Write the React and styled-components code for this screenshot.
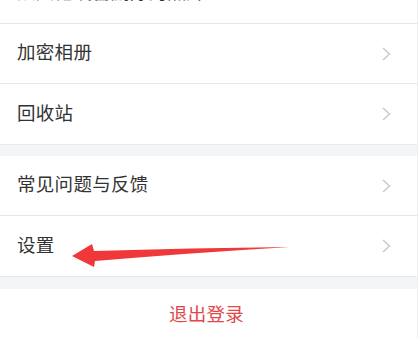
import React from "react";
import styled, { createGlobalStyle } from "styled-components";

const Global = createGlobalStyle`
  html, body { margin: 0; padding: 0; background: #fff; overflow: hidden; }
  body { font-family: "Noto Sans CJK SC", "Noto Sans", sans-serif; }
`;

const Page = styled.div`
  position: relative;
  width: 417px;
  height: 338px;
  overflow: hidden;
  border-right: 1px solid #eef0f2;
  background: #fff;
`;

const Scroll = styled.div`
  margin-top: -36px;
  display: flex;
  flex-direction: column;
`;

const Group = styled.div`
  background: #fff;
  display: flex;
  flex-direction: column;
`;

const Gap = styled.div`
  height: ${(p) => p.$h}px;
  background: #f4f5f7;
  border-top: 1px solid #eaeaea;
  box-sizing: border-box;
`;

const Row = styled.div`
  height: 60px;
  box-sizing: border-box;
  display: flex;
  align-items: center;
  justify-content: space-between;
  padding: 0 26px 4px 17px;
  border-bottom: ${(p) => (p.$last ? "none" : "1px solid #e6e6e6")};
`;

const Label = styled.span`
  font-size: 18.5px;
  line-height: 1;
  color: #333;
  letter-spacing: 0.3px;
`;

const Chevron = styled.svg`
  width: 9px;
  height: 14px;
  flex: none;
  margin-top: 4px;
`;

const Logout = styled.div`
  height: 48px;
  display: flex;
  align-items: center;
  justify-content: center;
  font-size: 18.5px;
  line-height: 1;
  color: #e2474a;
  letter-spacing: 0.3px;
  padding-right: 4px;
`;

const Arrow = styled.svg`
  position: absolute;
  left: 0;
  top: 0;
  width: 420px;
  height: 338px;
  pointer-events: none;
`;

function Item({ label, last }) {
  return (
    <Row $last={last}>
      <Label>{label}</Label>
      <Chevron viewBox="0 0 9 14">
        <path d="M1 1 L7.5 7 L1 13" fill="none" stroke="#c8c8cc" strokeWidth="1.4" />
      </Chevron>
    </Row>
  );
}

export default function App() {
  return (
    <>
      <Global />
      <Page>
        <Scroll>
          <Group>
            <Item label="从其他设备删除的照片" />
            <Item label="加密相册" />
            <Item label="回收站" last />
          </Group>
          <Gap $h={12} />
          <Group>
            <Item label="常见问题与反馈" />
            <Item label="设置" last />
          </Group>
          <Gap $h={13} />
          <Logout>退出登录</Logout>
        </Scroll>
        <Arrow viewBox="0 0 420 338">
          <path
            d="M72 256 L92 244 L94 251 Q190 248 290 247 Q190 253 95 261 L94 267 Z"
            fill="#f0383a"
          />
        </Arrow>
      </Page>
    </>
  );
}
